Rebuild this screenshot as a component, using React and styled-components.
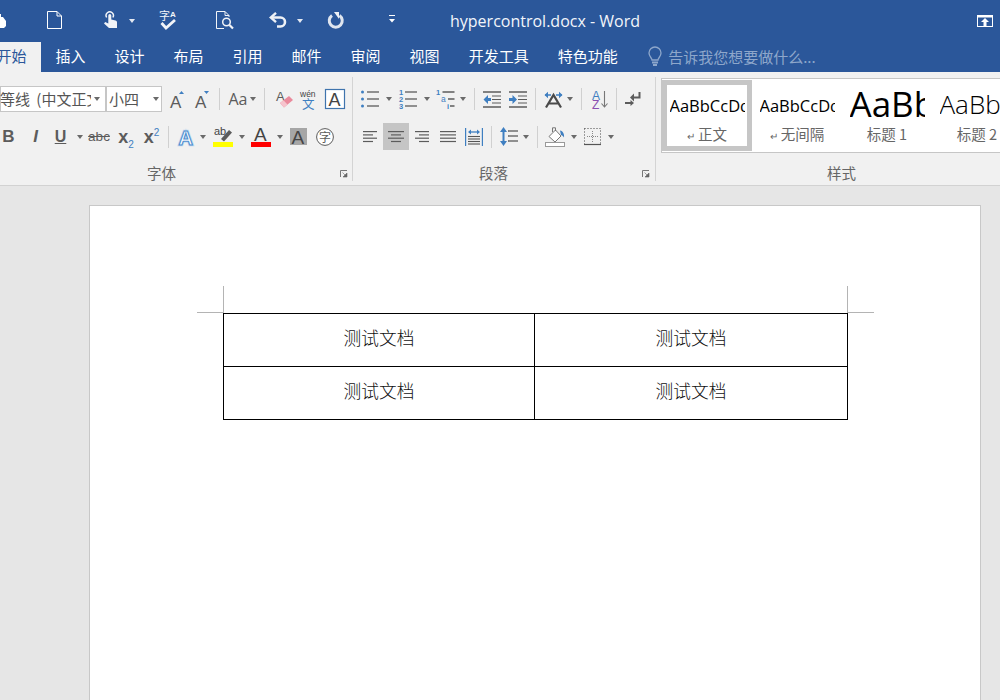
import styled, { createGlobalStyle } from 'styled-components';

const CJK = '"Noto Sans CJK SC", "Noto Sans", sans-serif';
const GREY = '#5c5c5c';
const BLUE = '#3f7fc1';

const GlobalStyle = createGlobalStyle`
  html, body {
    margin: 0;
    height: 100%;
    overflow: hidden;
    background: #e6e6e6;
  }
`;

const Window = styled.div`
  width: 1000px;
  height: 700px;
  overflow: hidden;
  display: flex;
  flex-direction: column;
  font-family: ${CJK};
`;

const TitleBar = styled.div`
  height: 42px;
  flex: none;
  display: flex;
  align-items: center;
  background: #2b579a;
  color: #fff;
`;

const TitleText = styled.div`
  margin-left: ${(p) => p.$ml}px;
  font-family: "Open Sans", sans-serif;
  font-size: 16px;
  white-space: nowrap;
  color: #f2f5fa;
`;

const TitleSlot = styled.div`
  flex: none;
  display: flex;
  width: ${(p) => p.$w}px;
  margin-left: ${(p) => p.$ml || 0}px;
  margin-top: ${(p) => p.$mt || 0}px;
`;

const RestoreSlot = styled(TitleSlot)`
  margin-left: auto;
  margin-right: 7px;
`;

const TabBar = styled.div`
  height: 30px;
  flex: none;
  display: flex;
  align-items: stretch;
  margin-left: -18px;
  background: #2b579a;
`;

const Tab = styled.div`
  padding: 0 14.5px;
  font-size: 15px;
  line-height: 28px;
  white-space: nowrap;
  color: ${(p) => (p.$active ? '#2b579a' : '#fff')};
  background: ${(p) => (p.$active ? '#f1f1f1' : 'transparent')};
`;

const TellMe = styled.div`
  margin-left: 16px;
  padding-bottom: 2px;
  display: flex;
  align-items: center;
  gap: 6px;
  font-size: 15px;
  color: #8ea7cb;
  white-space: nowrap;
`;

const Ribbon = styled.div`
  box-sizing: border-box;
  height: 114px;
  flex: none;
  display: flex;
  padding: 5px 0 4px;
  background: #f1f1f1;
  border-bottom: 1px solid #d2d2d2;
`;

const Group = styled.div`
  flex: none;
  width: ${(p) => p.$w}px;
  height: 104px;
  display: flex;
  flex-direction: column;
  box-sizing: border-box;
  border-right: ${(p) => (p.$last ? 'none' : '1px solid #d4d4d4')};
`;

const ToolRow = styled.div`
  display: flex;
  align-items: center;
  flex: none;
  height: ${(p) => p.$h}px;
  margin-top: ${(p) => p.$mt}px;
`;

const Tool = styled.div`
  flex: none;
  display: flex;
  align-items: center;
  justify-content: center;
  width: ${(p) => p.$w}px;
  margin-left: ${(p) => p.$ml || 0}px;
  color: ${GREY};
  white-space: nowrap;
`;

const ActiveTool = styled(Tool)`
  height: 27px;
  background: #c5c5c5;
`;

const Caret = styled.span`
  flex: none;
  width: 0;
  height: 0;
  margin-left: ${(p) => p.$ml || 0}px;
  border-left: 3.5px solid transparent;
  border-right: 3.5px solid transparent;
  border-top: 4px solid ${(p) => p.$color || '#6a6a6a'};
`;

const Sep = styled.span`
  flex: none;
  width: 1px;
  height: 22px;
  margin-left: ${(p) => p.$ml}px;
  background: #d0d0d0;
`;

const Select = styled.div`
  flex: none;
  box-sizing: border-box;
  height: 26px;
  width: ${(p) => p.$w}px;
  display: flex;
  align-items: center;
  background: #fff;
  border: 1px solid #c6c6c6;
  color: #555;
  font-size: 15px;
`;

const SelectText = styled.div`
  width: ${(p) => p.$w}px;
  margin-left: ${(p) => p.$ml}px;
  padding-bottom: 2px;
  overflow: hidden;
  white-space: nowrap;
  word-spacing: 3px;
`;

const Letter = styled.span`
  font-family: ${(p) => p.$family || '"Liberation Sans"'}, sans-serif;
  font-size: ${(p) => p.$size || 16}px;
  font-weight: ${(p) => (p.$bold ? 700 : 400)};
  font-style: ${(p) => (p.$italic ? 'italic' : 'normal')};
  text-decoration: ${(p) => p.$line || 'none'};
  line-height: 18px;
`;

const Sub = styled.sub`
  font-family: "Liberation Sans", sans-serif;
  font-size: 10px;
  font-weight: 400;
  color: ${BLUE};
  line-height: 0;
`;

const Sup = styled.sup`
  font-family: "Liberation Sans", sans-serif;
  font-size: 10px;
  font-weight: 400;
  color: ${BLUE};
  line-height: 0;
`;

const LabelRow = styled.div`
  flex: none;
  height: 16px;
  margin-top: ${(p) => p.$mt}px;
  display: flex;
  align-items: center;
`;

const GroupLabel = styled.div`
  margin-left: ${(p) => p.$ml}px;
  font-size: 14.5px;
  line-height: 16px;
  color: #666;
`;

const Launcher = styled.div`
  margin-left: auto;
  margin-right: ${(p) => p.$mr}px;
  display: flex;
`;

const Gallery = styled.div`
  flex: none;
  box-sizing: border-box;
  width: 344px;
  height: 75px;
  margin: 1px 0 0 5px;
  display: flex;
  overflow: hidden;
  background: #fff;
  border: 1px solid #c6c6c6;
  border-right: none;
`;

const StyleCard = styled.div`
  flex: none;
  box-sizing: border-box;
  width: 90px;
  height: 71px;
  margin-top: 1px;
  display: flex;
  flex-direction: column;
  align-items: center;
  padding: ${(p) => (p.$selected ? '0' : '5px 0 0')};
  border: ${(p) => (p.$selected ? '5px solid #c6c6c6' : 'none')};
`;

const StyleSample = styled.div`
  box-sizing: border-box;
  width: 75px;
  height: 40px;
  padding-bottom: ${(p) => p.$pb || 0}px;
  display: flex;
  align-items: center;
  overflow: hidden;
  white-space: nowrap;
  font-family: "Open Sans", sans-serif;
  font-size: ${(p) => p.$size || 16.5}px;
  font-weight: ${(p) => p.$weight || 400};
  color: #000;
`;

const StyleName = styled.div`
  font-size: 14.5px;
  line-height: 18px;
  color: #666;
  white-space: nowrap;
`;

const ReturnMark = styled.span`
  font-size: 10px;
  margin-right: 3px;
`;

const Workspace = styled.div`
  flex: 1;
  padding: 19px 0 0 89px;
  background: #e6e6e6;
`;

const Page = styled.div`
  box-sizing: border-box;
  width: 892px;
  height: 600px;
  padding: 107px 0 0 133px;
  background: #fff;
  border: 1px solid #c8c8c8;
`;

const TableFrame = styled.div`
  position: relative;
  width: 625px;
`;

const CropMark = styled.span`
  position: absolute;
  background: #b4b4b4;
  ${(p) => p.$side}: ${(p) => (p.$along ? '-26px' : '0')};
  top: ${(p) => (p.$along ? '-1px' : '-27px')};
  width: ${(p) => (p.$along ? '26px' : '1px')};
  height: ${(p) => (p.$along ? '1px' : '27px')};
`;

const DocTable = styled.table`
  width: 624px;
  table-layout: fixed;
  border-collapse: collapse;
`;

const DocColumn = styled.col`
  width: ${(p) => p.$w}px;
`;

const DocCell = styled.td`
  box-sizing: border-box;
  height: 53px;
  padding: 0 0 7px;
  border: 1px solid #000;
  text-align: center;
  font-size: 17.7px;
  font-weight: 300;
  color: #111;
`;

const Icon = ({ w, h, children }) => (
  <svg width={w} height={h} viewBox={`0 0 ${w} ${h}`} fill="none" style={{ display: 'block', overflow: 'visible' }}>
    {children}
  </svg>
);

const Lines = ({ x1, x2, ys, color = GREY, width = 1.3 }) =>
  ys.map((y) => <line key={y} x1={x1} x2={x2} y1={y} y2={y} stroke={color} strokeWidth={width} />);

const Tiny = ({ x, y, size = 7.5, fill = BLUE, bold, children, family = 'Liberation Sans' }) => (
  <text x={x} y={y} fontSize={size} fontFamily={family} fontWeight={bold ? 700 : 400} fill={fill}>
    {children}
  </text>
);

const SaveIcon = () => (
  <Icon w={6} h={14}>
    <path d="M-3 0h4v3h2l3 4v5l-2 2h-7z" fill="#fff" />
  </Icon>
);

const NewDocIcon = () => (
  <Icon w={15} h={18}>
    <path d="M.5.5H10L14.5 5v12.5H.5zM10 .5V5h4.5" stroke="#fff" />
  </Icon>
);

const TouchIcon = () => (
  <Icon w={14} h={17}>
    <path d="M3.6 6.5a3.7 3.7 0 1 1 6.3 0" stroke="#f2f4f8" strokeWidth="1.4" />
    <path d="M5.3 4.6a1.5 1.5 0 0 1 3 0v4l4.2 1c.9.3 1.5.8 1.5 1.7V17H6L1 12.4l1.2-1.3 3.1 1.5z" fill="#f2f4f8" />
  </Icon>
);

const SpellIcon = () => (
  <Icon w={18} h={20}>
    <Tiny x={0} y={10} size={11} fill="#f2f4f8" family="Noto Sans CJK SC">字</Tiny>
    <Tiny x={11} y={6.500} size={8} fill="#f2f4f8" bold>A</Tiny>
    <path d="M2.500 13l4.500 5L16 10" stroke="#f2f4f8" strokeWidth="2.800" />
  </Icon>
);

const PreviewIcon = () => (
  <Icon w={18} h={18}>
    <path d="M8 17.500H.5V.5H9l4 4V6M9 .5v4h4" stroke="#f2f4f8" />
    <circle cx="10.500" cy="11" r="3.800" stroke="#f2f4f8" strokeWidth="1.500" />
    <path d="M13.500 14l3.500 3.500" stroke="#f2f4f8" strokeWidth="2.200" />
  </Icon>
);

const UndoIcon = () => (
  <Icon w={18} h={16}>
    <path d="M3 5.500h8.500a4.500 4.500 0 0 1 0 9H8" stroke="#eef1f6" strokeWidth="2.600" />
    <path d="M7 .8L1.800 5.500 7 10.200" stroke="#eef1f6" strokeWidth="2.400" />
  </Icon>
);

const RedoIcon = () => (
  <Icon w={17} h={16}>
    <path d="M5 3.400a6.500 6.500 0 1 0 7.500 0" stroke="#dfe5ef" strokeWidth="3" />
    <path d="M7 0h5v7z" fill="#eef1f6" />
  </Icon>
);

const CustomizeIcon = () => (
  <Icon w={6} h={8}>
    <path d="M0 .5h6" stroke="#fff" />
    <path d="M0 4h6L3 7.500z" fill="#fff" />
  </Icon>
);

const RestoreIcon = () => (
  <Icon w={16} h={12}>
    <rect x=".5" y=".5" width="15" height="11" stroke="#fff" />
    <path d="M0 1.500h16" stroke="#fff" strokeWidth="2" />
    <path d="M8 3l4 4H9.500v4h-3V7H4z" fill="#fff" />
  </Icon>
);

const BulbIcon = () => (
  <Icon w={14} h={19}>
    <path d="M4 13c0-2-3-3.500-3-7a6 6 0 0 1 12 0c0 3.500-3 5-3 7z" stroke="#8ea7cb" strokeWidth="1.300" />
    <path d="M4 15.500h6M5 18h4" stroke="#8ea7cb" strokeWidth="1.800" />
  </Icon>
);

const SizeIcon = ({ down }) => (
  <Icon w={14} h={17}>
    <Tiny x={0} y={17} size={17} fill={GREY}>A</Tiny>
    <path d={down ? 'M9 0h5l-2.500 3z' : 'M9 3h5l-2.500-3z'} fill={BLUE} />
  </Icon>
);

const EraserIcon = () => (
  <Icon w={17} h={18}>
    <Tiny x={0} y={11} size={13} fill={GREY}>A</Tiny>
    <path d="M4 13l9-7 4 4-9 7.500z" fill="#ea8a9c" />
    <path d="M4 13l3.500-2.800 4 4.400L8 17.500z" fill="#f6c4cd" />
  </Icon>
);

const PhoneticIcon = () => (
  <Icon w={16} h={18}>
    <Tiny x={0} y={7} size={8.500} fill="#444">wén</Tiny>
    <Tiny x={2} y={18.500} size={12.500} fill={BLUE} family="Noto Sans CJK SC">文</Tiny>
  </Icon>
);

const BoxAIcon = () => (
  <Icon w={20} h={20}>
    <rect x=".5" y=".5" width="19" height="19" fill="#fff" stroke="#3f74ad" strokeWidth="1.200" />
    <Tiny x={3.500} y={16.500} size={18} fill="#444">A</Tiny>
  </Icon>
);

const GlowAIcon = () => (
  <Icon w={16} h={18}>
    <text x=".5" y="16.500" fontSize="20" fontFamily="Liberation Sans" fontWeight="700" fill="none" stroke="#c3d8ee" strokeWidth="2.600">A</text>
    <text x=".5" y="16.500" fontSize="20" fontFamily="Liberation Sans" fontWeight="700" fill="#fff" stroke="#4f8fd0" strokeWidth="1.100">A</text>
  </Icon>
);

const HighlightIcon = () => (
  <Icon w={20} h={21}>
    <Tiny x={1} y={9} size={11} fill="#444">ab</Tiny>
    <path d="M8 13l8-9 3 2.500-8 9z" fill={GREY} />
    <rect y="16" width="20" height="5" fill="#ffff00" />
  </Icon>
);

const ColorAIcon = () => (
  <Icon w={20} h={21}>
    <Tiny x={3} y={15} size={19} fill="#444">A</Tiny>
    <rect y="16" width="20" height="5" fill="#f00" />
  </Icon>
);

const ShadeAIcon = () => (
  <Icon w={17} h={17}>
    <rect width="17" height="17" fill="#a6a6a6" />
    <Tiny x={1.500} y={15.500} size={19} fill="#444">A</Tiny>
  </Icon>
);

const CircleCharIcon = () => (
  <Icon w={18} h={18}>
    <circle cx="9" cy="9" r="8.400" fill="#fff" stroke={GREY} />
    <Tiny x={3} y={13.500} size={12} fill={GREY} family="Noto Sans CJK SC">字</Tiny>
  </Icon>
);

const BulletsIcon = () => (
  <Icon w={18} h={18}>
    {[2, 9, 16].map((y) => <circle key={y} cx="1.500" cy={y} r="1.500" fill={BLUE} />)}
    <Lines x1={6} x2={18} ys={[2, 9, 16]} />
  </Icon>
);

const NumberingIcon = () => (
  <Icon w={18} h={18}>
    <Tiny x={0} y={5} bold>1</Tiny>
    <Tiny x={0} y={12} bold>2</Tiny>
    <Tiny x={0} y={19} bold>3</Tiny>
    <Lines x1={6} x2={18} ys={[2, 9, 16]} />
  </Icon>
);

const MultilevelIcon = () => (
  <Icon w={19} h={18}>
    <Tiny x={0} y={5} bold>1</Tiny>
    <Tiny x={5} y={12} size={8.500}>a</Tiny>
    <Tiny x={11} y={19} bold>i</Tiny>
    <path d="M6.500 2h12M12 9h6.500M14 16h4.500" stroke={GREY} strokeWidth="1.300" />
  </Icon>
);

const IndentIcon = ({ out }) => (
  <Icon w={18} h={17}>
    <path d="M0 1h18M0 16h18" stroke={GREY} strokeWidth="1.300" />
    <path d="M9 5h9M9 8.500h9M9 12h9" stroke={GREY} strokeWidth="1.100" />
    <path d={out ? 'M8 7H5V4L.5 8.500 5 13v-3h3z' : 'M0 7h3.500V4L8 8.500 3.500 13v-3H0z'} fill={BLUE} />
  </Icon>
);

const PhoneticGuideIcon = () => (
  <Icon w={19} h={17}>
    <path d="M1 4h6M12 4h6" stroke={BLUE} strokeWidth="1.600" />
    <path d="M4 .8L.5 4 4 7.200zM15 .8L18.500 4 15 7.200z" fill={BLUE} />
    <path d="M2 16.500L9.500 4 17 16.500M5 12.500h9" stroke="#4a4a4a" strokeWidth="2.200" />
  </Icon>
);

const SortIcon = () => (
  <Icon w={17} h={19}>
    <Tiny x={0} y={9.500} size={12} fill={BLUE}>A</Tiny>
    <Tiny x={0} y={19} size={12} fill="#8a4fb0">Z</Tiny>
    <path d="M12.500 1v16M9.500 13.500l3 3.500 3-3.500" stroke="#777" strokeWidth="1.100" />
  </Icon>
);

const MarksIcon = () => (
  <Icon w={16} h={14}>
    <path d="M14.500 0v5.500H7" stroke={GREY} strokeWidth="2" />
    <path d="M9 1.500L5 5.500 9 9.500z" fill={GREY} />
    <path d="M0 11h6" stroke={GREY} strokeWidth="2" />
    <path d="M5.500 8l3.500 3-3.500 3z" fill={GREY} />
  </Icon>
);

const AlignIcon = ({ w = 14, rows }) => (
  <Icon w={w} h={11}>
    {rows.map(([a, b], i) => <line key={i} x1={a} x2={b} y1={i * 3.300 + .6} y2={i * 3.300 + .6} stroke={GREY} strokeWidth="1.200" />)}
  </Icon>
);

const DistributedIcon = () => (
  <Icon w={18} h={18}>
    <path d="M.6 0v18M17.400 0v18" stroke={BLUE} strokeWidth="1.200" />
    <path d="M4 4h10" stroke={BLUE} strokeWidth="1.300" />
    <path d="M6 1.500L3 4l3 2.500zM12 1.500L15 4l-3 2.500z" fill={BLUE} />
    <Lines x1={3} x2={15} ys={[8.500, 11, 13.500, 16]} color="#555" width={1.100} />
  </Icon>
);

const LineSpacingIcon = () => (
  <Icon w={18} h={19}>
    <path d="M3.500 3v13" stroke={BLUE} strokeWidth="2" />
    <path d="M0 5l3.500-5L7 5zM0 14l3.500 5L7 14z" fill={BLUE} />
    <Lines x1={8} x2={18} ys={[4, 9, 14]} />
  </Icon>
);

const ShadingIcon = () => (
  <Icon w={20} h={20}>
    <path d="M4 9.500L10.500 3l5.500 6-6 6z" fill="#fff" stroke="#777" />
    <path d="M7.500 5V.8h3V4" stroke="#777" />
    <path d="M15 3.500c3 .5 4.500 3.500 4 7-1-1.500-2-2.500-3-2.500z" fill={BLUE} />
    <rect x=".5" y="15.500" width="19" height="4" fill="#fff" stroke="#999" />
  </Icon>
);

const BordersIcon = () => (
  <Icon w={17} h={17}>
    <path d="M.5.5h16v16M.5.5v16" stroke="#444" strokeDasharray="1 2" />
    <path d="M8.500 3v11M3 8.500h11" stroke="#888" strokeDasharray="1 1" />
    <path d="M0 16.500h17" stroke="#555" strokeWidth="1.200" />
  </Icon>
);

const LauncherIcon = () => (
  <Icon w={7} h={7}>
    <path d="M.5 7V.5H7" stroke="#777" />
    <path d="M2.500 2.500L6 6M7 3v4H3z" fill="#666" stroke="#666" strokeWidth=".6" />
  </Icon>
);

const tabs = ['开始', '插入', '设计', '布局', '引用', '邮件', '审阅', '视图', '开发工具', '特色功能'];

const galleryStyles = [
  { name: '正文', mark: true, selected: true, sample: 'AaBbCcDd' },
  { name: '无间隔', mark: true, sample: 'AaBbCcDd' },
  { name: '标题 1', sample: 'AaBb', size: 35, weight: 500, pb: 4 },
  { name: '标题 2', sample: 'AaBb', size: 26, weight: 300, pb: 2 },
];

const App = () => (
  <Window>
    <GlobalStyle />

    <TitleBar>
      <TitleSlot $w={6} $mt={-1}><SaveIcon /></TitleSlot>
      <TitleSlot $w={15} $ml={41} $mt={-2}><NewDocIcon /></TitleSlot>
      <TitleSlot $w={14} $ml={41} $mt={-3}><TouchIcon /></TitleSlot>
      <Caret $ml={12} $color="#e4e9f2" />
      <TitleSlot $w={18} $ml={24} $mt={-2}><SpellIcon /></TitleSlot>
      <TitleSlot $w={18} $ml={39} $mt={-2}><PreviewIcon /></TitleSlot>
      <TitleSlot $w={18} $ml={35} $mt={-2}><UndoIcon /></TitleSlot>
      <Caret $ml={10} $color="#e4e9f2" />
      <TitleSlot $w={17} $ml={24} $mt={-2}><RedoIcon /></TitleSlot>
      <TitleSlot $w={6} $ml={45} $mt={-4}><CustomizeIcon /></TitleSlot>
      <TitleText $ml={55}>hypercontrol.docx - Word</TitleText>
      <RestoreSlot $w={16}><RestoreIcon /></RestoreSlot>
    </TitleBar>

    <TabBar>
      {tabs.map((tab, i) => <Tab key={tab} $active={i === 0}>{tab}</Tab>)}
      <TellMe><BulbIcon />告诉我您想要做什么...</TellMe>
    </TabBar>

    <Ribbon>
      <Group $w={353}>
        <ToolRow $h={26} $mt={9}>
          <Select $w={106}>
            <SelectText $w={91} $ml={-1}>等线 (中文正文</SelectText>
            <Caret $ml={3} />
          </Select>
          <Select $w={56}>
            <SelectText $w={30} $ml={2}>小四</SelectText>
            <Caret $ml={14} />
          </Select>
          <Tool $w={14} $ml={8}><SizeIcon /></Tool>
          <Tool $w={14} $ml={11}><SizeIcon down /></Tool>
          <Sep $ml={10} />
          <Tool $w={18} $ml={9}><Letter $size={16} $family='"Open Sans"'>Aa</Letter></Tool>
          <Caret $ml={3} />
          <Sep $ml={8} />
          <Tool $w={17} $ml={11}><EraserIcon /></Tool>
          <Tool $w={16} $ml={7}><PhoneticIcon /></Tool>
          <Tool $w={20} $ml={9}><BoxAIcon /></Tool>
        </ToolRow>
        <ToolRow $h={27} $mt={11}>
          <Tool $w={9} $ml={4}><Letter $bold $size={17}>B</Letter></Tool>
          <Tool $w={9} $ml={18}><Letter $bold $italic $size={17}>I</Letter></Tool>
          <Tool $w={11} $ml={15}><Letter $bold $line="underline">U</Letter></Tool>
          <Caret $ml={11} />
          <Tool $w={20} $ml={6}><Letter $size={13.5} $line="line-through">abc</Letter></Tool>
          <Tool $w={16} $ml={9}><Letter $bold $size={18}>x<Sub>2</Sub></Letter></Tool>
          <Tool $w={15} $ml={10}><Letter $bold $size={18}>x<Sup>2</Sup></Letter></Tool>
          <Sep $ml={9} />
          <Tool $w={16} $ml={9}><GlowAIcon /></Tool>
          <Caret $ml={6} />
          <Tool $w={20} $ml={7}><HighlightIcon /></Tool>
          <Caret $ml={6} />
          <Tool $w={20} $ml={6}><ColorAIcon /></Tool>
          <Caret $ml={6} />
          <Tool $w={17} $ml={7}><ShadeAIcon /></Tool>
          <Tool $w={18} $ml={9}><CircleCharIcon /></Tool>
        </ToolRow>
        <LabelRow $mt={15}>
          <GroupLabel $ml={147}>字体</GroupLabel>
          <Launcher $mr={5}><LauncherIcon /></Launcher>
        </LabelRow>
      </Group>

      <Group $w={303}>
        <ToolRow $h={26} $mt={9}>
          <Tool $w={18} $ml={8}><BulletsIcon /></Tool>
          <Caret $ml={7} />
          <Tool $w={18} $ml={7}><NumberingIcon /></Tool>
          <Caret $ml={7} />
          <Tool $w={19} $ml={6}><MultilevelIcon /></Tool>
          <Caret $ml={5} />
          <Sep $ml={8} />
          <Tool $w={18} $ml={8}><IndentIcon out /></Tool>
          <Tool $w={18} $ml={8}><IndentIcon /></Tool>
          <Sep $ml={8} />
          <Tool $w={19} $ml={8}><PhoneticGuideIcon /></Tool>
          <Caret $ml={4} />
          <Sep $ml={8} />
          <Tool $w={17} $ml={10}><SortIcon /></Tool>
          <Sep $ml={7} />
          <Tool $w={16} $ml={8}><MarksIcon /></Tool>
        </ToolRow>
        <ToolRow $h={27} $mt={11}>
          <Tool $w={14} $ml={10}><AlignIcon rows={[[0, 14], [0, 10], [0, 14], [0, 10]]} /></Tool>
          <ActiveTool $w={26} $ml={6}><AlignIcon w={16} rows={[[0, 16], [3, 13], [0, 16], [3, 13]]} /></ActiveTool>
          <Tool $w={14} $ml={6}><AlignIcon rows={[[0, 14], [4, 14], [0, 14], [4, 14]]} /></Tool>
          <Tool $w={16} $ml={11}><AlignIcon w={16} rows={[[0, 16], [0, 16], [0, 16], [0, 16]]} /></Tool>
          <Tool $w={18} $ml={9}><DistributedIcon /></Tool>
          <Sep $ml={8} />
          <Tool $w={18} $ml={8}><LineSpacingIcon /></Tool>
          <Caret $ml={5} />
          <Sep $ml={8} />
          <Tool $w={20} $ml={7}><ShadingIcon /></Tool>
          <Caret $ml={6} />
          <Tool $w={17} $ml={7}><BordersIcon /></Tool>
          <Caret $ml={7} />
        </ToolRow>
        <LabelRow $mt={15}>
          <GroupLabel $ml={126}>段落</GroupLabel>
          <Launcher $mr={6}><LauncherIcon /></Launcher>
        </LabelRow>
      </Group>

      <Group $w={344} $last>
        <Gallery>
          {galleryStyles.map((item) => (
            <StyleCard key={item.name} $selected={item.selected}>
              <StyleSample $size={item.size} $weight={item.weight} $pb={item.pb}>{item.sample}</StyleSample>
              <StyleName>{item.mark && <ReturnMark>↵</ReturnMark>}{item.name}</StyleName>
            </StyleCard>
          ))}
        </Gallery>
        <LabelRow $mt={12}>
          <GroupLabel $ml={171}>样式</GroupLabel>
        </LabelRow>
      </Group>
    </Ribbon>

    <Workspace>
      <Page>
        <TableFrame>
          <CropMark $side="left" />
          <CropMark $side="left" $along />
          <CropMark $side="right" />
          <CropMark $side="right" $along />
          <DocTable>
            <colgroup>
              <DocColumn $w={311} />
              <DocColumn $w={313} />
            </colgroup>
            <tbody>
              <tr><DocCell>测试文档</DocCell><DocCell>测试文档</DocCell></tr>
              <tr><DocCell>测试文档</DocCell><DocCell>测试文档</DocCell></tr>
            </tbody>
          </DocTable>
        </TableFrame>
      </Page>
    </Workspace>
  </Window>
);

export default App;
